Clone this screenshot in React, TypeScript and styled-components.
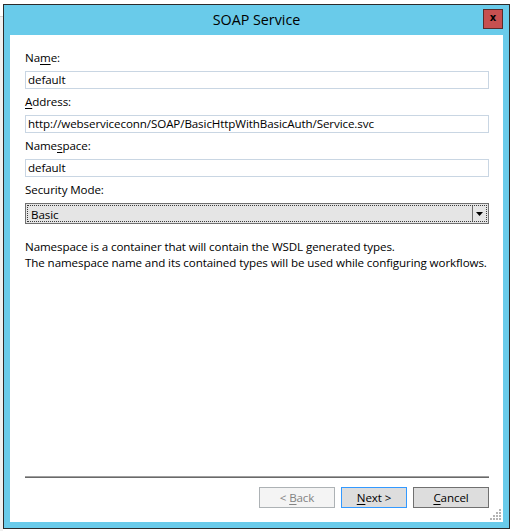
import React from "react";
import styled, { createGlobalStyle } from "styled-components";

const Global = createGlobalStyle`
  html, body { margin: 0; padding: 0; background: #ffffff; }
  body { font-family: "Segoe UI", "Open Sans", "Noto Sans", sans-serif; font-size: 11.6px; letter-spacing: -0.1px; color: #000; }
  * { box-sizing: border-box; }
`;

const Page = styled.div`
  display: flex;
  width: 511px;
  height: 531px;
  overflow: hidden;
  background: #ffffff;
`;

const LeftStrip = styled.div`
  width: 3px;
  margin-top: 16px;
  height: 515px;
  background: #f0f0f0;
  border-top: 1px solid #d4d4d4;
`;

const Window = styled.div`
  margin-top: 4px;
  width: 507px;
  height: 525px;
  border: 1px solid #2b2b2b;
  background: #69cbea;
  display: flex;
  flex-direction: column;
`;

const TitleBar = styled.div`
  position: relative;
  height: 30px;
  flex: none;
  display: flex;
  align-items: center;
  justify-content: center;
`;

const Title = styled.div`
  font-size: 14.3px;
  letter-spacing: 0;
  color: #000;
  margin-top: -1px;
`;

const CloseButton = styled.div`
  position: absolute;
  right: 6px;
  top: 4px;
  width: 20px;
  height: 20px;
  background: #c75050;
  border: 1px solid #5a2b2b;
  display: flex;
  align-items: center;
  justify-content: center;
  font-family: "DejaVu Sans", sans-serif;
  font-weight: bold;
  font-size: 10px;
  line-height: 1;
  color: #000;
  padding-bottom: 2px;
`;

const Client = styled.div`
  position: relative;
  flex: 1;
  margin: 0 6px 6px 6px;
  background: #ffffff;
  display: flex;
  flex-direction: column;
  padding: 10px 14px 14px 15px;
`;

const Label = styled.div`
  height: 16px;
  line-height: 16px;
  margin: 5px 0 5px 0;
`;

const U = styled.span`
  text-decoration: underline;
  text-underline-offset: 2px;
`;

const TextInput = styled.div`
  height: 18px;
  border: 1px solid #c9d6e3;
  padding: 0 2px;
  line-height: 16px;
  white-space: nowrap;
  overflow: hidden;
`;

const Select = styled.div`
  height: 21px;
  border: 1px solid #707070;
  background: #e5e5e5;
  padding: 1px;
`;

const SelectInner = styled.div`
  height: 100%;
  border: 1px dotted #3a3a3a;
  display: flex;
  align-items: stretch;
`;

const SelectValue = styled.div`
  flex: 1;
  line-height: 16px;
  padding-left: 3px;
  padding-top: 1px;
`;

const SelectArrow = styled.div`
  width: 14px;
  border-left: 1px solid #6e6e6e;
  display: flex;
  align-items: center;
  justify-content: center;
`;

const Description = styled.div`
  margin-top: 15px;
  line-height: 16px;
  white-space: nowrap;
`;

const Spacer = styled.div`
  flex: 1;
`;

const Separator = styled.div`
  height: 2px;
  border-top: 1px solid #a0a0a0;
  border-bottom: 1px solid #696969;
`;

const ButtonRow = styled.div`
  margin-top: 9px;
  display: flex;
  justify-content: flex-end;
  gap: 6px;
`;

const Button = styled.div<{ $w: number; $variant: "disabled" | "default" | "normal" }>`
  width: ${(p) => p.$w}px;
  height: 21px;
  display: flex;
  align-items: center;
  justify-content: center;
  border: 1px solid
    ${(p) => (p.$variant === "disabled" ? "#adb2b5" : p.$variant === "default" ? "#3399ff" : "#707070")};
  background: ${(p) => (p.$variant === "disabled" ? "#f4f4f4" : "#dddddd")};
  color: ${(p) => (p.$variant === "disabled" ? "#838383" : "#000")};
  line-height: 16px;
`;

const Grip = styled.svg`
  position: absolute;
  right: 2px;
  bottom: 2px;
`;

export default function App() {
  const dots: [number, number][] = [];
  for (let r = 0; r < 4; r++) {
    for (let c = 3 - r; c < 4; c++) dots.push([c * 3, r * 3]);
  }
  return (
    <>
      <Global />
      <Page>
        <LeftStrip />
        <Window>
          <TitleBar>
            <Title>SOAP Service</Title>
            <CloseButton>x</CloseButton>
          </TitleBar>
          <Client>
            <Label>
              Na<U>m</U>e:
            </Label>
            <TextInput>default</TextInput>
            <Label>
              <U>A</U>ddress:
            </Label>
            <TextInput>http://webserviceconn/SOAP/BasicHttpWithBasicAuth/Service.svc</TextInput>
            <Label>
              Name<U>s</U>pace:
            </Label>
            <TextInput>default</TextInput>
            <Label>Security Mode:</Label>
            <Select>
              <SelectInner>
                <SelectValue>Basic</SelectValue>
                <SelectArrow>
                  <svg width="7" height="4" viewBox="0 0 7 4">
                    <path d="M0 0 H7 L3.5 4 Z" fill="#000" />
                  </svg>
                </SelectArrow>
              </SelectInner>
            </Select>
            <Description>
              Namespace is a container that will contain the WSDL generated types.
              <br />
              The namespace name and its contained types will be used while configuring workflows.
            </Description>
            <Spacer />
            <Separator />
            <ButtonRow>
              <Button $w={76} $variant="disabled">
                &lt;&nbsp;<U>B</U>ack
              </Button>
              <Button $w={66} $variant="default">
                <U>N</U>ext &gt;
              </Button>
              <Button $w={76} $variant="normal">
                <U>C</U>ancel
              </Button>
            </ButtonRow>
            <Grip width="11" height="11" viewBox="0 0 11 11">
              {dots.map(([x, y], i) => (
                <rect key={i} x={x} y={y} width="2" height="2" fill="#b4b4b4" />
              ))}
            </Grip>
          </Client>
        </Window>
      </Page>
    </>
  );
}
